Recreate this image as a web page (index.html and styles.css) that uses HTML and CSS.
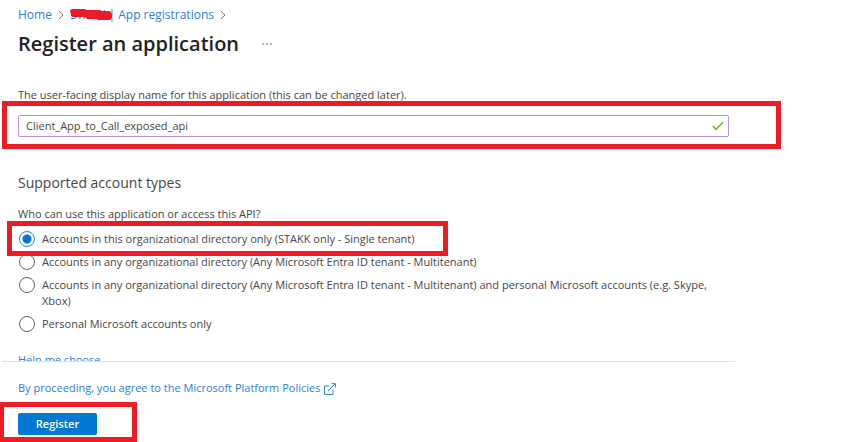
FILE: index.html
```html
<!DOCTYPE html>
<html lang="en">
<head>
<meta charset="utf-8">
<title>Register an application</title>
<link rel="stylesheet" href="styles.css">
</head>
<body>
<header class="top">
  <nav class="crumbs" aria-label="Breadcrumb">
    <a href="#">Home</a>
    <svg class="chevron" viewBox="0 0 6 10" aria-hidden="true"><path d="M.8 1 5 5 .8 9"/></svg>
    <a class="tenant" href="#">STAKK | App registrations
      <svg class="scribble" viewBox="0 0 42 12" aria-hidden="true"><path d="M0 2Q0 0 3 0L15 0 16 1 30 1 32 2 40 2 42 5 42 9 40 11 28 11 26 10 17 10 15 8 3 8Q0 7 1 5Z"/></svg>
    </a>
    <svg class="chevron" viewBox="0 0 6 10" aria-hidden="true"><path d="M.8 1 5 5 .8 9"/></svg>
  </nav>
  <div class="title-row">
    <h1>Register an application</h1>
    <button class="more" type="button" aria-label="More">
      <svg viewBox="0 0 12 4" aria-hidden="true"><circle cx="2" cy="2" r=".8"/><circle cx="6" cy="2" r=".8"/><circle cx="10" cy="2" r=".8"/></svg>
    </button>
  </div>
</header>
<form class="form">
  <div class="fields">
    <label class="name-label" for="name">The user-facing display name for this application (this can be changed later).</label>
    <div class="name-field">
      <input class="name" id="name" type="text" value="Client_App_to_Call_exposed_api">
      <svg class="check" viewBox="0 0 12 10" aria-hidden="true"><path d="M1 5 4 8.300 11 1.300"/></svg>
      <span class="mark mark-name"></span>
    </div>
    <h2>Supported account types</h2>
    <fieldset class="types">
      <legend>Who can use this application or access this API?</legend>
      <div class="option">
        <input id="single" type="radio" name="type" checked>
        <label for="single">Accounts in this organizational directory only (STAKK only - Single tenant)</label>
        <span class="mark mark-option"></span>
      </div>
      <div class="option">
        <input id="multi" type="radio" name="type">
        <label for="multi">Accounts in any organizational directory (Any Microsoft Entra ID tenant - Multitenant)</label>
      </div>
      <div class="option">
        <input id="both" type="radio" name="type">
        <label for="both">Accounts in any organizational directory (Any Microsoft Entra ID tenant - Multitenant) and personal Microsoft accounts (e.g. Skype, Xbox)</label>
      </div>
      <div class="option">
        <input id="personal" type="radio" name="type">
        <label for="personal">Personal Microsoft accounts only</label>
      </div>
    </fieldset>
    <div class="help"><a href="#">Help me choose</a></div>
  </div>
  <footer class="actions">
    <a class="policy" href="#">By proceeding, you agree to the Microsoft Platform Policies
      <svg class="external" viewBox="0 0 12 12" aria-hidden="true"><path d="M5 3H.5V11.500H9V7M4 8 11 1M7.500.6H11.400V4.500"/></svg>
    </a>
    <div class="submit">
      <button class="register" type="submit">Register</button>
      <span class="mark mark-submit"></span>
    </div>
  </footer>
</form>
</body>
</html>
```
FILE: styles.css
```css
* {
  box-sizing: border-box;
}

body {
  margin: 0;
  background: #fff;
  color: #484644;
  font: 11px/16px "Open Sans", "Noto Sans", sans-serif;
}

a {
  color: #2b7fd3;
  text-decoration: none;
}

button,
input {
  font: inherit;
}

.top {
  padding: 7px 18px 0;
}

.crumbs {
  display: flex;
  align-items: center;
  gap: 6px;
  font-size: 12px;
}

.chevron {
  width: 6px;
  height: 10px;
  fill: none;
  stroke: #777;
}

.tenant {
  position: relative;
}

.scribble {
  position: absolute;
  left: 0;
  top: 2px;
  width: 42px;
  height: 12px;
  fill: #ed1c24;
}

.title-row {
  display: flex;
  align-items: center;
  gap: 22px;
  margin-top: 7px;
}

h1 {
  margin: 0;
  color: #222;
  font-size: 20px;
  font-weight: 600;
  line-height: 28px;
}

.more {
  display: flex;
  padding: 0;
  border: 0;
  background: none;
}

.more svg {
  width: 12px;
  height: 4px;
  fill: #555;
}

.form {
  max-width: 735px;
}

.fields {
  padding: 29px 6px 0 18px;
}

.name-label {
  display: block;
}

.name-field {
  position: relative;
  margin-top: 12px;
}

.name {
  display: block;
  width: 100%;
  height: 22px;
  padding: 0 28px 2px 7px;
  border: 1px solid #c08fd6;
  border-radius: 2px;
  background: #fff;
  color: #484644;
  outline: 0;
}

.check {
  position: absolute;
  right: 5px;
  top: 6px;
  width: 12px;
  height: 10px;
  fill: none;
  stroke: #6bb52d;
  stroke-width: 1.5;
}

.mark {
  position: absolute;
  border: 5px solid #ed1c24;
  pointer-events: none;
}

.mark-name {
  inset: -14px -52px -12px -16px;
}

h2 {
  margin: 36px 0 0;
  font-size: 14px;
  font-weight: 400;
  line-height: 20px;
}

.types {
  min-width: 0;
  margin: 13px 0 0;
  padding: 0;
  border: 0;
}

legend {
  padding: 0;
  margin-bottom: 9px;
}

.option {
  position: relative;
  display: flex;
  align-items: flex-start;
  gap: 7px;
  margin-bottom: 7px;
}

.option input {
  flex: none;
  width: 16px;
  height: 16px;
  margin: 0 0 0 1px;
  border: 1px solid #666;
  border-radius: 50%;
  background: #fff;
  appearance: none;
}

.option input:checked {
  border-color: #2b88d8;
  background: radial-gradient(circle, #0078d4 4px, #fff 5px);
}

.mark-option {
  z-index: 1;
  left: -11px;
  top: -10px;
  width: 441px;
  height: 35px;
}

.help {
  height: 9px;
  margin-top: 13px;
  overflow: hidden;
}

.actions {
  margin-left: 2px;
  padding: 18px 16px 7px;
  border-top: 1px solid #e1e1e1;
}

.policy {
  display: flex;
  align-items: center;
  gap: 4px;
}

.external {
  width: 12px;
  height: 12px;
  margin-top: 2px;
  fill: none;
  stroke: #3b82d8;
}

.submit {
  position: relative;
  width: fit-content;
  margin-top: 17px;
}

.register {
  display: block;
  width: 79px;
  height: 22px;
  padding: 0;
  border: 0;
  border-radius: 2px;
  background: #0078d4;
  color: #fff;
  font-weight: 600;
}

.mark-submit {
  inset: -11px -40px -7px -19px;
}
```
